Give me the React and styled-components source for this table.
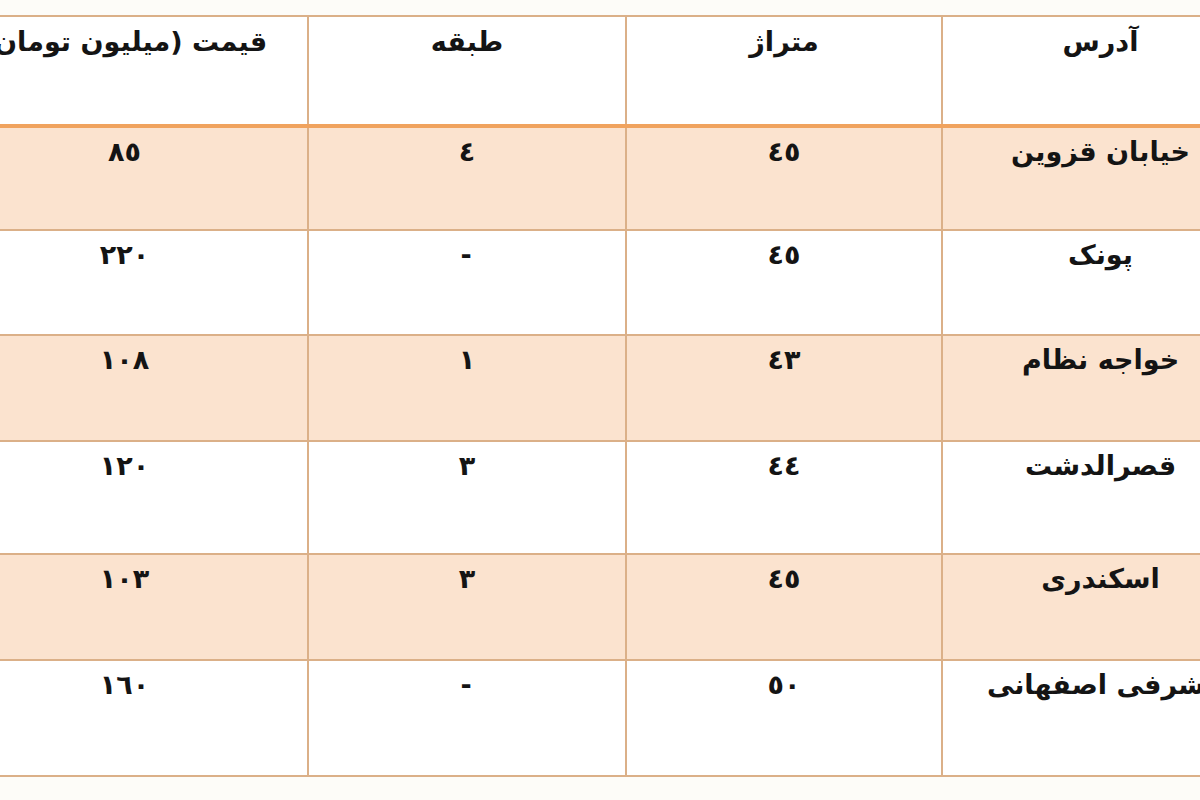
import React from "react";
import styled, { createGlobalStyle } from "styled-components";

const Global = createGlobalStyle`
  html, body { margin: 0; padding: 0; background: #fdfcf8; }
  body { font-family: "DejaVu Sans", "Noto Sans", sans-serif; }
  #root { width: 1200px; height: 800px; overflow: hidden; }
`;

const Page = styled.div`
  width: 1200px;
  height: 800px;
  overflow: hidden;
  padding-top: 15px;
  box-sizing: border-box;
  background: #fdfcf8;
`;

const Table = styled.table`
  direction: rtl;
  margin-left: -60px;
  width: 1318px;
  table-layout: fixed;
  border-collapse: collapse;
  font-family: "DejaVu Sans", sans-serif;
  font-weight: bold;
  font-size: 27px;
  line-height: 32px;
  color: #141414;
`;

const Row = styled.tr`
  height: ${(p) => p.$h}px;
  background: ${(p) => (p.$shaded ? "#fbe3cf" : "#ffffff")};
`;

const HeadCell = styled.th`
  font-weight: bold;
  vertical-align: top;
  text-align: center;
  padding: 9px 6px 0;
  border: 2px solid #dbb088;
  border-bottom: 4px solid #f0a35e;
  white-space: nowrap;
`;

const Cell = styled.td`
  vertical-align: top;
  text-align: center;
  padding: 8px 6px 0;
  border: 2px solid #dbb088;
  white-space: nowrap;
`;

const Num = styled.span`
  letter-spacing: 2px;
`;

const rows = [
  { addr: "خیابان قزوین", area: "٤٥", floor: "٤", price: "٨٥", h: 104 },
  { addr: "پونک", area: "٤٥", floor: "-", price: "٢٢٠", h: 105 },
  { addr: "خواجه نظام", area: "٤٣", floor: "١", price: "١٠٨", h: 106 },
  { addr: "قصرالدشت", area: "٤٤", floor: "٣", price: "١٢٠", h: 113 },
  { addr: "اسکندری", area: "٤٥", floor: "٣", price: "١٠٣", h: 106 },
  { addr: "اشرفی اصفهانی", area: "٥٠", floor: "-", price: "١٦٠", h: 116 },
];

export default function App() {
  return (
    <>
      <Global />
      <Page>
        <Table>
          <colgroup>
            <col style={{ width: 317 }} />
            <col style={{ width: 316 }} />
            <col style={{ width: 318 }} />
            <col style={{ width: 367 }} />
          </colgroup>
          <thead>
            <Row $h={110}>
              <HeadCell>آدرس</HeadCell>
              <HeadCell>متراژ</HeadCell>
              <HeadCell>طبقه</HeadCell>
              <HeadCell>قیمت (میلیون تومان)</HeadCell>
            </Row>
          </thead>
          <tbody>
            {rows.map((r, i) => (
              <Row key={i} $h={r.h} $shaded={i % 2 === 0}>
                <Cell>{r.addr}</Cell>
                <Cell><Num>{r.area}</Num></Cell>
                <Cell><Num>{r.floor}</Num></Cell>
                <Cell><Num>{r.price}</Num></Cell>
              </Row>
            ))}
          </tbody>
        </Table>
      </Page>
    </>
  );
}
